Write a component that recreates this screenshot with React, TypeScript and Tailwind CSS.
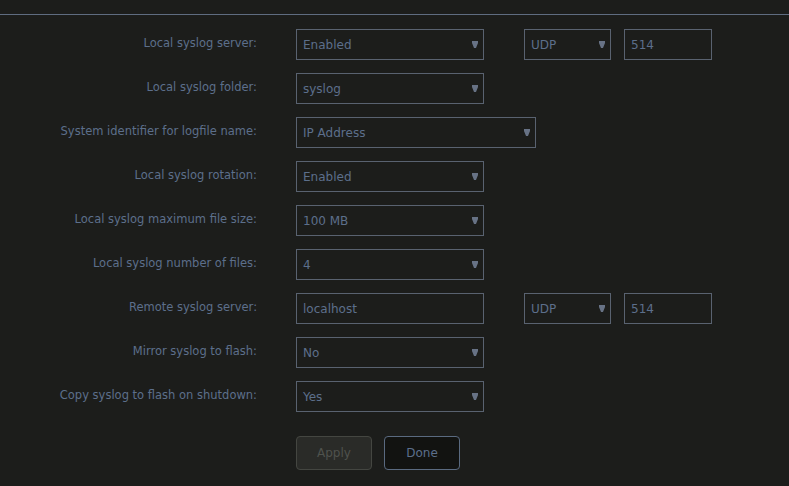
import { ReactNode } from "react";

const Arrow = () => (
  <svg width="6" height="7" viewBox="0 0 6 7" className="absolute right-[5px] top-[11px]">
    <path d="M0 0h6v2L4 7h-2L0 2z" fill="#677285" />
  </svg>
);

const Select = ({ value, w }: { value: string; w: string }) => (
  <div className={`relative h-[31px] ${w} border border-[#596270] bg-[#1c1d1b] pl-[6px] flex items-center`}>
    <span className="text-[#5c6f8b]">{value}</span>
    <Arrow />
  </div>
);

const Input = ({ value, w }: { value: string; w: string }) => (
  <div className={`h-[31px] ${w} border border-[#596270] bg-[#1c1d1b] pl-[6px] flex items-center`}>
    <span className="text-[#5c6f8b]">{value}</span>
  </div>
);

const Row = ({ label, children }: { label: string; children: ReactNode }) => (
  <div className="flex items-center h-[31px]">
    <div className="w-[257px] text-right text-[11.5px] text-[#5c6f8b] -mt-[2px]">{label}</div>
    <div className="ml-[39px] flex items-center">{children}</div>
  </div>
);

export default function App() {
  return (
    <div
      className="w-[789px] h-[486px] bg-[#1c1d1b] overflow-hidden text-[12px]"
      style={{ fontFamily: '"DejaVu Sans", sans-serif' }}
    >
      <div className="h-[14px]" />
      <div className="h-px bg-[#5f6c80]" />
      <div className="pt-[14px] flex flex-col gap-[13px]">
        <Row label="Local syslog server:">
          <Select value="Enabled" w="w-[188px]" />
          <div className="ml-[40px]">
            <Select value="UDP" w="w-[87px]" />
          </div>
          <div className="ml-[13px]">
            <Input value="514" w="w-[88px]" />
          </div>
        </Row>
        <Row label="Local syslog folder:">
          <Select value="syslog" w="w-[188px]" />
        </Row>
        <Row label="System identifier for logfile name:">
          <Select value="IP Address" w="w-[240px]" />
        </Row>
        <Row label="Local syslog rotation:">
          <Select value="Enabled" w="w-[188px]" />
        </Row>
        <Row label="Local syslog maximum file size:">
          <Select value="100 MB" w="w-[188px]" />
        </Row>
        <Row label="Local syslog number of files:">
          <Select value="4" w="w-[188px]" />
        </Row>
        <Row label="Remote syslog server:">
          <Input value="localhost" w="w-[188px]" />
          <div className="ml-[40px]">
            <Select value="UDP" w="w-[87px]" />
          </div>
          <div className="ml-[13px]">
            <Input value="514" w="w-[88px]" />
          </div>
        </Row>
        <Row label="Mirror syslog to flash:">
          <Select value="No" w="w-[188px]" />
        </Row>
        <Row label="Copy syslog to flash on shutdown:">
          <Select value="Yes" w="w-[188px]" />
        </Row>
      </div>
      <div className="flex gap-[12px] ml-[296px] mt-[24px]">
        <button className="w-[76px] h-[34px] rounded-[4px] border border-[#444641] bg-[#2a2b28] text-[#4f524d]">
          Apply
        </button>
        <button className="w-[76px] h-[34px] rounded-[4px] border border-[#5a6a80] bg-[#121311] text-[#5c6f8b]">
          Done
        </button>
      </div>
    </div>
  );
}
